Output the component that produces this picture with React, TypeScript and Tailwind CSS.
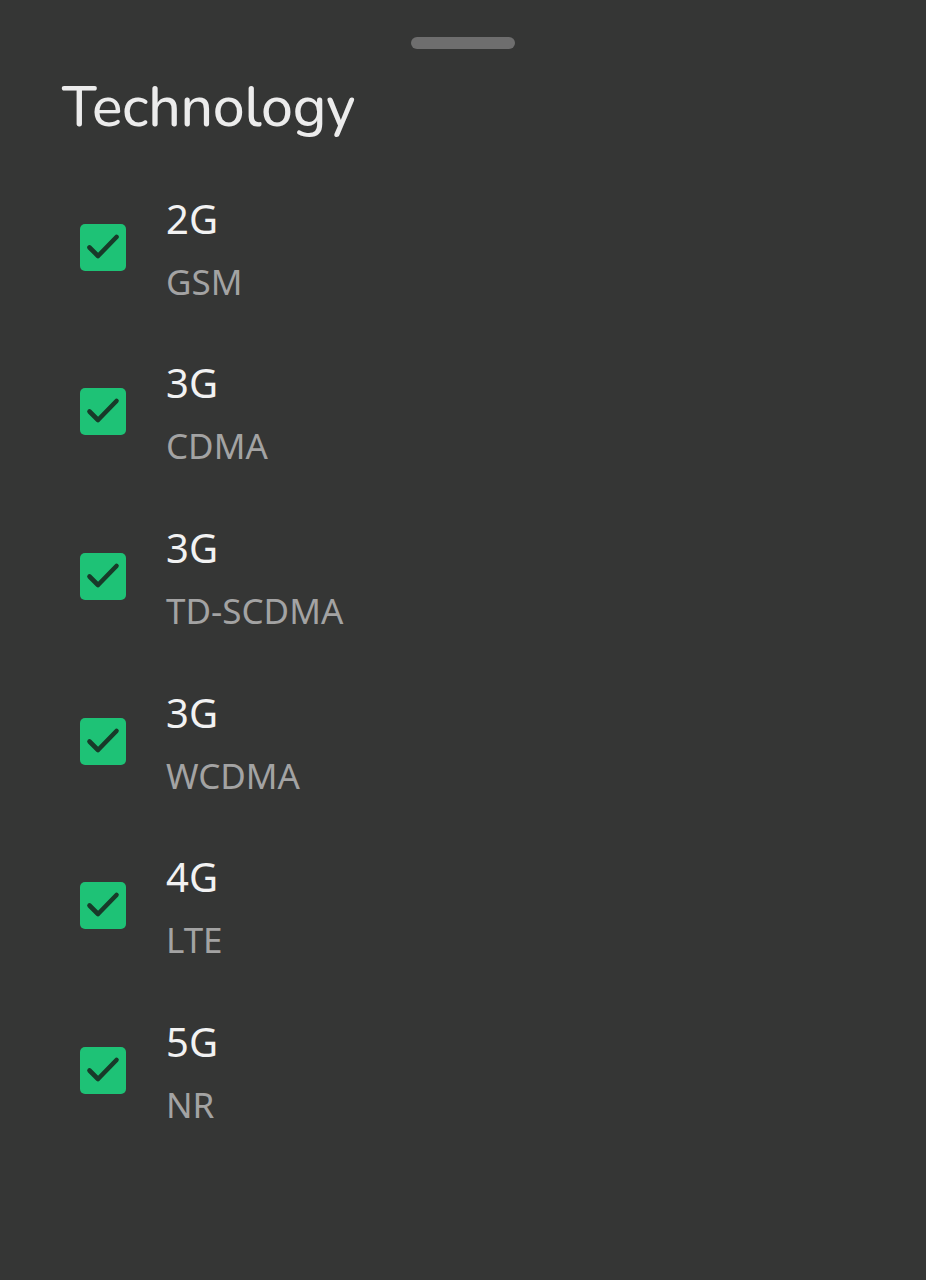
const items = [
  { gen: '2G', name: 'GSM' },
  { gen: '3G', name: 'CDMA' },
  { gen: '3G', name: 'TD-SCDMA' },
  { gen: '3G', name: 'WCDMA' },
  { gen: '4G', name: 'LTE' },
  { gen: '5G', name: 'NR' },
];

function CheckBox() {
  return (
    <div className="w-[46px] h-[47px] rounded-[5px] bg-[#1ec276]">
      <svg width="46" height="47" viewBox="0 0 46 47" fill="none">
        <path d="M9.5 23.5l8.5 8.5L36.5 13" stroke="#183a29" strokeWidth="4.6" strokeLinecap="round" strokeLinejoin="round" />
      </svg>
    </div>
  );
}

export default function App() {
  return (
    <div className="w-[926px] h-[1280px] bg-[#353635] overflow-hidden font-['Noto_Sans','Open_Sans',sans-serif]">
      <div className="flex justify-center pt-[37px]">
        <div className="w-[104px] h-[12px] rounded-full bg-[#6e6e6e]" />
      </div>
      <h1 className="pl-[62px] mt-[26px] text-[57px] leading-[64px] font-medium text-[#ececec] font-['Nunito','Open_Sans',sans-serif] tracking-[-0.3px]">
        Technology
      </h1>
      <div className="mt-[26px] flex flex-col">
        {items.map((it, i) => (
          <div key={i} className="flex items-center h-[164.6px] pl-[80px] gap-[40px]">
            <CheckBox />
            <div className="flex flex-col pt-[3px]">
              <span className="text-[40px] leading-[46px] text-[#f2f2f2]">{it.gen}</span>
              <span className="mt-[20px] text-[35px] leading-[40px] text-[#a3a3a3]">{it.name}</span>
            </div>
          </div>
        ))}
      </div>
    </div>
  );
}
